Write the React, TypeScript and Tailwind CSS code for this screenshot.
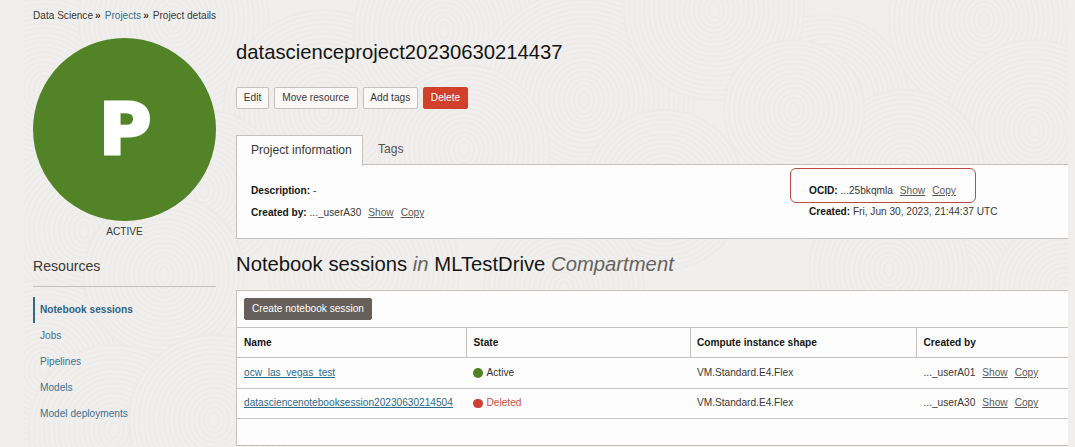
import type { ReactNode } from "react";

const swirls: [number, number, number][] = [
  [20, 90, 110], [150, 20, 95], [300, 110, 100], [420, 30, 90], [560, 100, 110],
  [800, 100, 85], [960, 20, 95], [1010, 130, 90], [880, 170, 80], [690, 10, 90],
  [60, 230, 90], [180, 190, 80], [440, 150, 85], [340, 270, 95], [640, 190, 80],
  [770, 110, 70], [930, 280, 90], [540, 290, 80], [20, 370, 90], [140, 275, 80],
  [90, 430, 85], [190, 420, 85], [1040, 290, 70], [865, 270, 80],
];

function Texture() {
  return (
    <svg className="absolute left-6 top-0" width="1044" height="447" aria-hidden="true">
      {swirls.map(([cx, cy, r], i) => (
        <g key={i} fill="none" stroke="#edebea" strokeWidth="1.8">
          <circle cx={cx} cy={cy} r={r} fill="#f0efed" />
          {Array.from({ length: Math.floor(r / 5) }, (_, k) => (
            <ellipse key={k} cx={cx} cy={cy} rx={r - k * 5} ry={r - k * 4.8} />
          ))}
        </g>
      ))}
    </svg>
  );
}

function Reveal({ value }: { value: string }) {
  return (
    <>
      <span>{value}</span>
      <a className="ml-[7px] text-[#5c5955] underline">Show</a>
      <a className="ml-[7px] text-[#5c5955] underline">Copy</a>
    </>
  );
}

function Button({ children, className }: { children: ReactNode; className: string }) {
  return (
    <button className={`flex h-[22px] items-center justify-center rounded-[2px] border whitespace-nowrap ${className}`}>
      {children}
    </button>
  );
}

const columns = "grid grid-cols-[229px_224px_226px_1fr]";

function Row({ name, state, color, dot, user }: { name: string; state: string; color: string; dot: string; user: string }) {
  return (
    <div className={`${columns} h-[30.5px] items-center border-b border-[#c9c7c5]`}>
      <div className="pl-[7px]">
        <a className="text-[#2f6a8c] underline">{name}</a>
      </div>
      <div className={`flex items-center gap-1 pl-[7px] ${color}`}>
        <i className={`size-[9.5px] rounded-full ${dot}`} />
        {state}
      </div>
      <div className="pl-[7px]">VM.Standard.E4.Flex</div>
      <div className="pl-[7.5px]">
        <Reveal value={user} />
      </div>
    </div>
  );
}

export default function App() {
  return (
    <div className="relative h-[447px] w-[1075px] overflow-hidden bg-[#f0efed] font-['Liberation_Sans',Arial,sans-serif] text-[10.15px] leading-4 text-[#3a3735]">
      <Texture />
      <div className="relative flex h-full flex-col pl-[33px]">
        <nav className="mt-2 flex h-4 items-center text-[10.1px]">
          <span>Data Science</span>
          <b className="ml-[2px] mr-1">»</b>
          <a className="text-[#376f96]">Projects</a>
          <b className="ml-[2px] mr-1">»</b>
          <span>Project details</span>
        </nav>
        <div className="flex min-h-0 flex-1">
          <aside className="w-[183px] shrink-0 pt-[14px]">
            <div className="flex size-[182.5px] items-center justify-center rounded-full bg-[#528427] pl-[2px] font-['DejaVu_Sans',sans-serif] text-[71.5px] leading-none font-bold text-white [-webkit-text-stroke:3px_white]">
              P
            </div>
            <div className="mt-[3px] text-center">ACTIVE</div>
            <h2 className="mt-[16px] h-[31px] border-b border-[#c4c1be] text-[14.1px] leading-5">Resources</h2>
            <ul className="mt-[10px] text-[#41708f]">
              <li className="h-[26px] border-l-2 border-[#2f6a8c] pl-[5px] leading-[26px] font-bold text-[#2f6285]">Notebook sessions</li>
              <li className="h-[26px] pl-[7px] leading-[26px]">Jobs</li>
              <li className="h-[26px] pl-[7px] leading-[26px]">Pipelines</li>
              <li className="h-[26px] pl-[7px] leading-[26px]">Models</li>
              <li className="h-[26px] pl-[7px] leading-[26px]">Model deployments</li>
            </ul>
          </aside>
          <main className="ml-5 flex w-[832px] flex-col pt-4">
            <h1 className="text-[20.25px] leading-6 text-[#161513]">datascienceproject20230630214437</h1>
            <div className="mt-[23px] flex gap-[5px]">
              <Button className="w-[33px] border-[#c4c1be] bg-[#fbf9f8]">Edit</Button>
              <Button className="w-[83.5px] border-[#c4c1be] bg-[#fbf9f8]">Move resource</Button>
              <Button className="w-[55.5px] border-[#c4c1be] bg-[#fbf9f8]">Add tags</Button>
              <Button className="w-[45px] border-[#d1402b] bg-[#d1402b] text-white">Delete</Button>
            </div>
            <div className="mt-[26px] flex h-[30px] text-[12.1px]">
              <div className="relative z-10 -mb-px w-[127px] border border-b-0 border-[#c4c1be] bg-[#fdfdfd] pl-[14px] leading-[29px]">
                Project information
              </div>
              <div className="pl-[15px] leading-[28px] text-[#55524f]">Tags</div>
            </div>
            <section className="-mt-px grid h-[75px] grid-cols-[557px_1fr] border border-r-0 border-[#c4c1be] bg-[#fdfdfd]">
              <div className="pt-[18px] pl-[14px]">
                <p><b className="text-[#161513]">Description:</b> -</p>
                <p className="mt-[6px]"><b className="text-[#161513]">Created by:</b> <Reveal value="..._userA30" /></p>
              </div>
              <div className="relative pt-[18px] pl-[15px]">
                <div className="absolute top-[3px] left-[-4px] h-[35px] w-[186px] rounded-[6px] border border-[#bd4a45]" />
                <p><b className="text-[#161513]">OCID:</b> <Reveal value="...25bkqmla" /></p>
                <p className="mt-[5px]"><b className="text-[#161513]">Created:</b> Fri, Jun 30, 2023, 21:44:37 UTC</p>
              </div>
            </section>
            <h2 className="mt-[13px] text-[20.27px] leading-6 text-[#161513]">
              Notebook sessions <em className="text-[#66625f]">in</em> MLTestDrive <em className="text-[#66625f]">Compartment</em>
            </h2>
            <section className="mt-[14px] h-[156px] border border-r-0 border-[#c4c1be] bg-[#fdfdfd]">
              <div className="h-[37px] border-b border-[#c4c1be] pt-[7px] pl-[7px]">
                <Button className="w-[128px] border-[#665f5b] bg-[#665f5b] text-white">Create notebook session</Button>
              </div>
              <div className={`${columns} h-[30px] border-b border-[#c4c1be] leading-[29px] font-bold text-[#161513]`}>
                <div className="pl-[7px]">Name</div>
                <div className="border-l border-[#c4c1be] pl-[6.5px]">State</div>
                <div className="border-l border-[#c4c1be] pl-[6px]">Compute instance shape</div>
                <div className="border-l border-[#c4c1be] pl-[6.5px]">Created by</div>
              </div>
              <Row name="ocw_las_vegas_test" state="Active" color="text-[#33302e]" dot="bg-[#508223]" user="..._userA01" />
              <Row name="datasciencenotebooksession20230630214504" state="Deleted" color="text-[#d1503e]" dot="bg-[#cf3f32]" user="..._userA30" />
            </section>
          </main>
        </div>
      </div>
    </div>
  );
}
